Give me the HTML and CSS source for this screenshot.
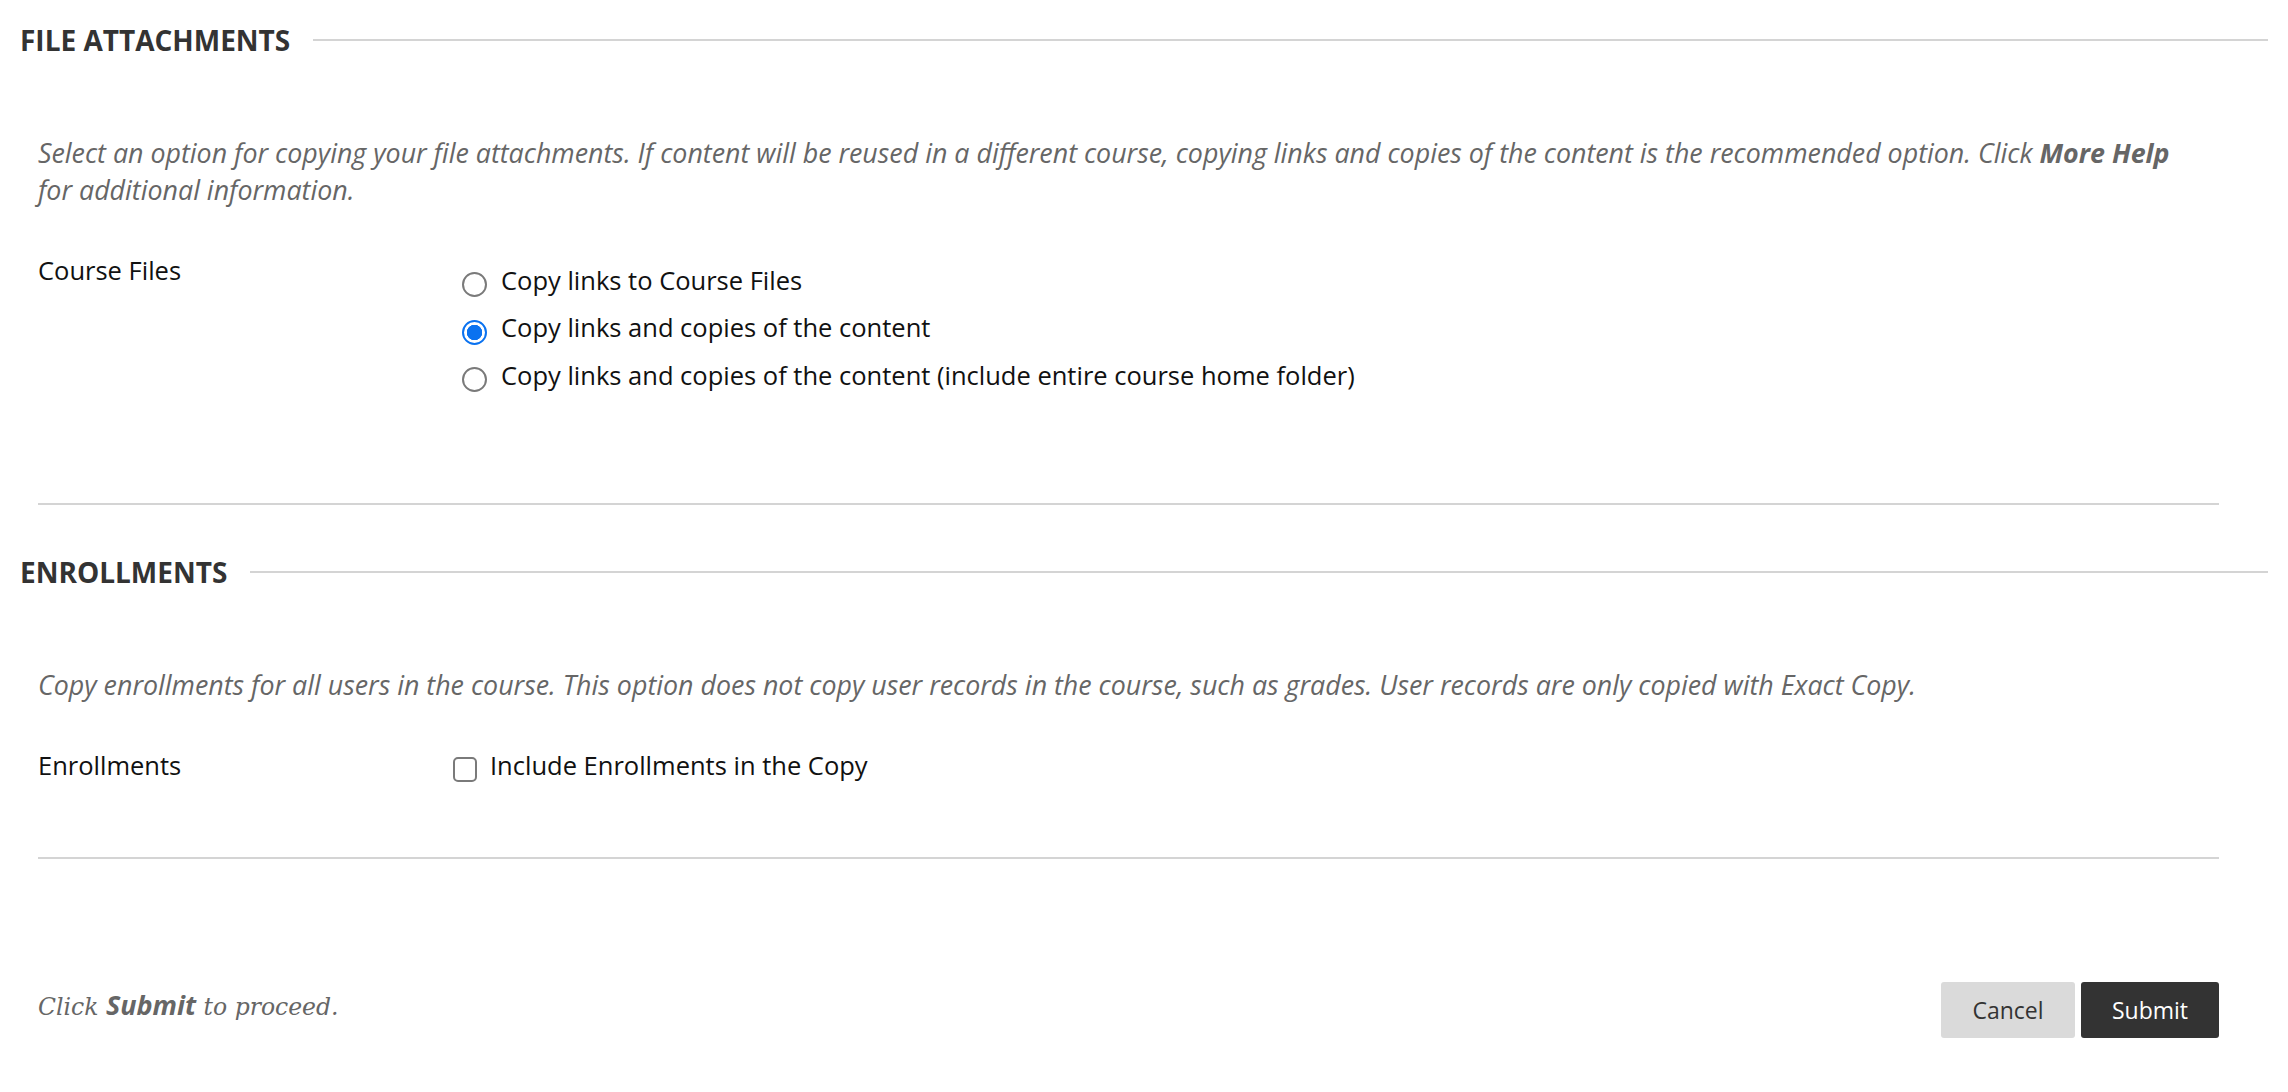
FILE: index.html
```html
<!DOCTYPE html>
<html lang="en">
<head>
<meta charset="utf-8">
<title>Copy Course</title>
<link rel="stylesheet" href="styles.css">
</head>
<body>
<div class="page">
  <section class="step">
    <h2 class="step-title"><span>FILE ATTACHMENTS</span></h2>
    <p class="instructions">Select an option for copying your file attachments. If content will be reused in a different course, copying links and copies of the content is the recommended option. Click <strong>More Help</strong> for additional information.</p>
    <div class="field-row">
      <div class="field-label">Course Files</div>
      <div class="field-options radios">
        <label class="option"><input type="radio" name="files" class="radio"> Copy links to Course Files</label>
        <label class="option"><input type="radio" name="files" class="radio" checked> Copy links and copies of the content</label>
        <label class="option"><input type="radio" name="files" class="radio"> Copy links and copies of the content (include entire course home folder)</label>
      </div>
    </div>
    <hr class="divider first">
  </section>

  <section class="step">
    <h2 class="step-title"><span>ENROLLMENTS</span></h2>
    <p class="instructions">Copy enrollments for all users in the course. This option does not copy user records in the course, such as grades. User records are only copied with Exact Copy.</p>
    <div class="field-row">
      <div class="field-label">Enrollments</div>
      <div class="field-options">
        <label class="option check"><input type="checkbox" class="checkbox"> Include Enrollments in the Copy</label>
      </div>
    </div>
    <hr class="divider second">
  </section>

  <div class="submit-bar">
    <p class="submit-note">Click <strong>Submit</strong> to proceed.</p>
    <div class="buttons">
      <button class="btn btn-cancel" type="button">Cancel</button>
      <button class="btn btn-submit" type="button">Submit</button>
    </div>
  </div>
</div>
</body>
</html>
```

FILE: styles.css
```css
* { box-sizing: border-box; }

body {
  margin: 0;
  background: #fff;
  font-family: "Open Sans", "Noto Sans", sans-serif;
  font-size: 25.5px;
  color: #111;
}

.page {
  padding: 22px 20px 40px 20px;
}

.step-title {
  display: flex;
  align-items: center;
  margin: 0;
  font-size: 28px;
  line-height: 36px;
  font-weight: 700;
  color: #333;
}

.step-title::after {
  content: "";
  flex: 1;
  height: 2px;
  background: #d4d4d4;
  margin-left: 23px;
}

.instructions {
  margin: 76px 0 0 18px;
  padding-right: 78px;
  font-style: italic;
  font-size: 26.8px;
  line-height: 37px;
  color: #666;
}

.instructions strong {
  font-weight: 700;
}

.field-row {
  display: grid;
  grid-template-columns: 412px 1fr;
  margin: 44px 0 0 18px;
}

.field-label {
  line-height: 36px;
}

.field-options.radios {
  padding-top: 4px;
}

.option {
  display: flex;
  align-items: center;
  height: 47.5px;
  line-height: 36px;
}

.option.check {
  height: 36px;
}

.radio {
  appearance: none;
  -webkit-appearance: none;
  flex: none;
  width: 25px;
  height: 25px;
  margin: 10px 14px 0 12px;
  border: 2px solid #7a7a7a;
  border-radius: 50%;
  background: #fff;
}

.radio:checked {
  border: 2.5px solid #0a72f0;
  background: radial-gradient(circle, #0a72f0 0 7.5px, #fff 8px);
}

.checkbox {
  appearance: none;
  -webkit-appearance: none;
  flex: none;
  width: 24px;
  height: 25px;
  margin: 9px 13px 0 3px;
  border: 2px solid #7a7a7a;
  border-radius: 5px;
  background: #fff;
}

.divider {
  border: 0;
  height: 2px;
  background: #d4d4d4;
  margin: 0 49px 0 18px;
}

.divider.first {
  margin-top: 104px;
  margin-bottom: 49px;
}

.divider.second {
  margin-top: 74px;
}

.submit-bar {
  display: flex;
  align-items: center;
  justify-content: space-between;
  margin: 123px 49px 0 18px;
}

.submit-note {
  margin: 0 0 10px 0;
  font-family: "DejaVu Serif", "Liberation Serif", serif;
  font-style: italic;
  font-size: 23.5px;
  color: #666;
}

.submit-note strong {
  font-family: "Open Sans", sans-serif;
  font-weight: 700;
  font-size: 27px;
}

.buttons {
  display: flex;
  gap: 6px;
}

.btn {
  height: 56px;
  border: 0;
  border-radius: 3px;
  font-family: "Open Sans", sans-serif;
  font-size: 23px;
  cursor: pointer;
}

.btn-cancel {
  width: 134px;
  background: #dadada;
  color: #333;
}

.btn-submit {
  width: 138px;
  background: #333;
  color: #fff;
}
```
